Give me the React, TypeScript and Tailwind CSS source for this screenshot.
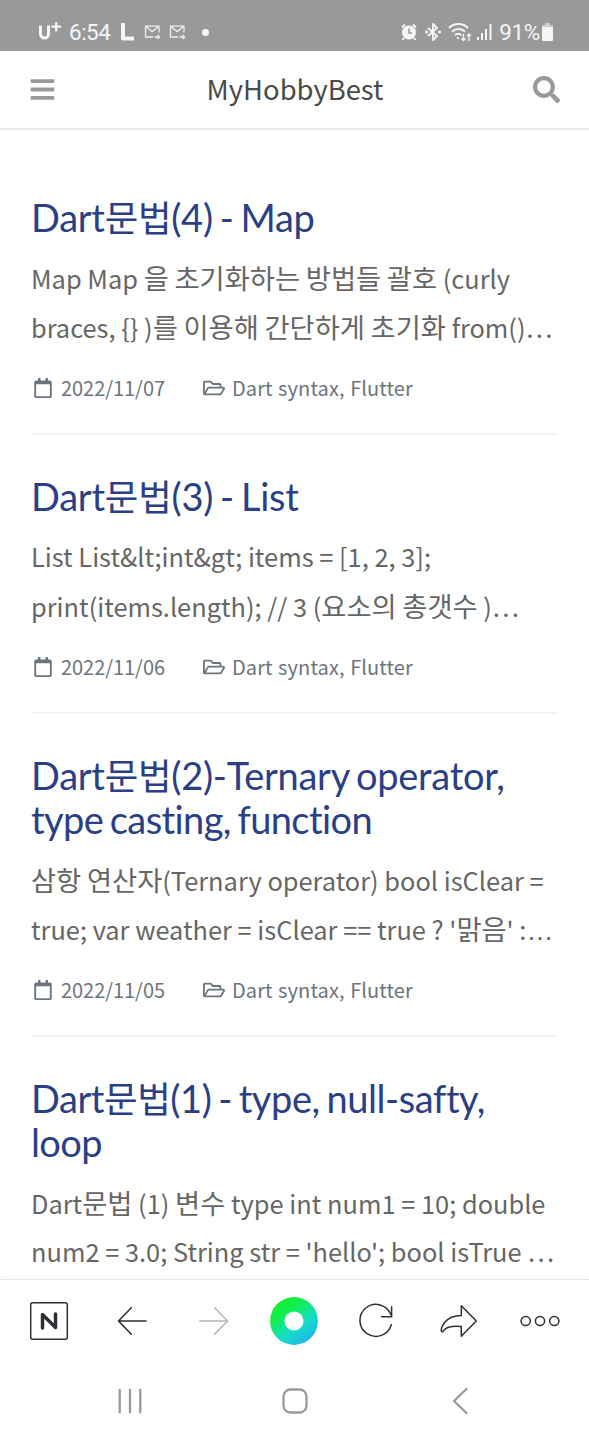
import React from 'react';
import { FaBars, FaSearch, FaRegCalendar, FaRegFolderOpen } from 'react-icons/fa';

type Line = { text: string; spacing: string };
type Post = { title: Line[]; body: string[]; date?: string };

const posts: Post[] = [
  {
    title: [{ text: 'Dart문법(4) - Map', spacing: 'tracking-[-0.28px]' }],
    body: ['Map Map 을 초기화하는 방법들 괄호 (curly', 'braces, {} )를 이용해 간단하게 초기화 from()…'],
    date: '2022/11/07',
  },
  {
    title: [{ text: 'Dart문법(3) - List', spacing: 'tracking-[-0.24px]' }],
    body: ['List List&lt;int&gt; items = [1, 2, 3];', 'print(items.length); // 3 (요소의 총갯수 )…'],
    date: '2022/11/06',
  },
  {
    title: [
      { text: 'Dart문법(2)-Ternary operator,', spacing: 'tracking-[-0.27px]' },
      { text: 'type casting, function', spacing: 'tracking-[-0.6px]' },
    ],
    body: ['삼항 연산자(Ternary operator) bool isClear =', "true; var weather = isClear == true ? '맑음' :…"],
    date: '2022/11/05',
  },
  {
    title: [
      { text: 'Dart문법(1) - type, null-safty,', spacing: 'tracking-[-0.43px]' },
      { text: 'loop', spacing: 'tracking-[-0.6px]' },
    ],
    body: ['Dart문법 (1) 변수 type int num1 = 10; double', "num2 = 3.0; String str = 'hello'; bool isTrue …"],
  },
];

function Runs({ text, hangul }: { text: string; hangul: string }) {
  return (
    <>
      {text.split(/([가-힣]+|(?<=:)…)/).map((run, i) => (
        <span key={i} className={run === '…' ? "inline-block font-['Liberation_Sans',sans-serif] text-[27px]" : i % 2 ? hangul : ''}>{run}</span>
      ))}
    </>
  );
}

function MailIcon() {
  return (
    <svg width="17" height="16" viewBox="0 0 17 16" fill="none" stroke="#eee" strokeWidth="1.3">
      <path d="M9 13H1.500V2.200H15v6.300M1.800 2.600l6.400 5 6.400-5M10.500 13h5M13.600 11l2 2-2 2" />
    </svg>
  );
}

function StatusBar() {
  return (
    <div className="flex h-[51px] shrink-0 items-center justify-between bg-[#999999] pr-[36px] pl-[38px] pt-[13px] font-[Roboto,sans-serif] text-[#f5f5f5]">
      <div className="flex items-center">
        <svg width="23" height="20" viewBox="0 0 23 20" fill="none" stroke="#f5f5f5">
          <path d="M2.500 3.500v8.500a4 4 0 0 0 8 0V3.500" strokeWidth="3" />
          <path d="M18.200 0v9.500M13.500 4.700h9.500" strokeWidth="2.200" />
        </svg>
        <span className="ml-[8px] text-[22.5px] leading-5 tracking-[-0.5px]">6:54</span>
        <svg className="ml-[10px]" width="15" height="20" viewBox="0 0 15 20" fill="none" stroke="#f5f5f5" strokeWidth="4" strokeLinejoin="round">
          <path d="M3 1v15.500h11" />
        </svg>
        <span className="ml-[9px] flex gap-2"><MailIcon /><MailIcon /></span>
        <span className="ml-[16px] size-[7px] rounded-full bg-[#f5f5f5]" />
      </div>
      <div className="flex items-center">
        <svg width="16" height="18" viewBox="0 0 16 18">
          <circle cx="8" cy="9.500" r="7" fill="#f5f5f5" />
          <path d="M1 4.500l3-3M15 4.500l-3-3M3 15l-1.500 2M13 15l1.500 2" stroke="#f5f5f5" strokeWidth="2" />
          <path d="M8 5.500v4.500h3" fill="none" stroke="#999" strokeWidth="1.500" />
        </svg>
        <svg className="ml-[8px]" width="16" height="18" viewBox="0 0 16 18" fill="none" stroke="#f5f5f5" strokeWidth="1.900">
          <path d="M3 5l9 8-4 4V1l4 4-9 8" />
          <circle cx="1.500" cy="9" r=".6" /><circle cx="14.500" cy="9" r=".6" />
        </svg>
        <svg className="ml-[7px]" width="24" height="19" viewBox="0 0 24 19" fill="none" stroke="#f5f5f5" strokeWidth="2">
          <path d="M1 5a13.500 13.500 0 0 1 19 0M4 8.700a9.300 9.300 0 0 1 13 0M7 12.200a5 5 0 0 1 6.500 0" />
          <circle cx="10" cy="15" r=".8" fill="#f5f5f5" strokeWidth="1" />
          <path d="M15.500 11v6.500M13.500 15.500l2 2 2-2M21 18v-7M19 13l2-2 2 2" strokeWidth="1.400" />
        </svg>
        <svg className="ml-[5px]" width="15" height="18" viewBox="0 0 15 18" fill="#f5f5f5">
          <path d="M0 14h2v3H0zM4 10h2v7H4zM8 6h2v11H8zM12.500 1h2v16h-2z" />
        </svg>
        <span className="ml-[7px] text-[22.5px] leading-5 tracking-[-0.3px]">91%</span>
        <svg className="ml-[2px]" width="11" height="18" viewBox="0 0 11 18">
          <path d="M3 0h5v2h3v3H0V2h3z" fill="#ccc" /><rect y="4" width="11" height="14" rx="1" fill="#f5f5f5" />
        </svg>
      </div>
    </div>
  );
}

function Article({ post }: { post: Post }) {
  return (
    <article>
      <h2 className="font-[Lato,'Noto_Sans_CJK_KR',sans-serif] text-[38px] leading-[44px] whitespace-nowrap text-[#2a3f86] [font-variant-ligatures:none] [word-spacing:-2.5px]">
        {post.title.map((line) => (
          <span key={line.text} className={'block h-[44px] ' + line.spacing}><Runs text={line.text} hangul="text-[36.5px]" /></span>
        ))}
      </h2>
      <p className="mt-[14px] text-[25.4px] leading-[49px] whitespace-nowrap text-[#666]">
        {post.body.map((line) => (
          <span key={line} className="block h-[49px]"><Runs text={line} hangul="text-[27.3px]" /></span>
        ))}
      </p>
      {post.date && (
        <div className="mb-[39px] flex h-[84px] items-center border-b-2 border-[#f3f3f3] pb-[8px] pl-[2px] text-[20px] text-[#6c757d]">
          <FaRegCalendar className="text-[20px]" />
          <span className="ml-[8px] w-[105px] tracking-[-0.05px]">{post.date}</span>
          <FaRegFolderOpen className="ml-[37px] text-[22px]" />
          <span className="ml-[7px] tracking-[0.1px] [word-spacing:0.8px]">Dart syntax, Flutter</span>
        </div>
      )}
    </article>
  );
}

const tool = 'mx-auto block';

export default function App() {
  return (
    <div lang="en" className="flex h-[1440px] w-[589px] flex-col overflow-hidden bg-white font-['Noto_Sans_CJK_KR',sans-serif]">
      <StatusBar />
      <header className="flex h-[79px] shrink-0 items-center justify-between border-b-2 border-[#e8e8e8] pr-[29px] pl-[29px] text-[#999]">
        <FaBars className="text-[27px]" />
        <h1 className="pb-[2px] pl-[1px] text-[27.4px] text-[#4a4a4a]">MyHobbyBest</h1>
        <FaSearch className="text-[27px]" />
      </header>
      <main className="min-h-0 flex-1 overflow-hidden pt-[65px] pr-[31px] pl-[31px]">
        {posts.map((post) => <Article key={post.title[0].text} post={post} />)}
      </main>
      <nav className="grid h-[82px] shrink-0 grid-cols-7 items-center border-t border-[#e4e7ea] bg-white px-2 shadow-[0_-2px_6px_rgba(0,0,40,0.04)]">
        <svg className={tool} width="48" height="48" viewBox="-24 -24 48 48" fill="none" stroke="#2d3036">
          <rect x="-18.300" y="-18.300" width="36.600" height="36.600" rx="2" strokeWidth="1.500" />
          <path d="M-6.500 7V-6.500L6.500 6.500V-7" strokeWidth="3.500" strokeLinecap="round" strokeLinejoin="round" />
        </svg>
        <svg className={tool} width="48" height="48" viewBox="-24 -24 48 48" fill="none" stroke="#2d3036" strokeWidth="1.600" strokeLinecap="round" strokeLinejoin="round">
          <path d="M.3-13.200L-12.500 0 .3 13.200M-12.500 0H15" />
        </svg>
        <svg className={tool} width="48" height="48" viewBox="-24 -24 48 48" fill="none" stroke="#b5b5b5" strokeWidth="1.600" strokeLinecap="round" strokeLinejoin="round">
          <path d="M1.600-13.200L14.600 0 1.600 13.200M14.600 0H-13.200" />
        </svg>
        <svg className={tool} width="48" height="48" viewBox="-24 -24 48 48">
          <defs>
            <linearGradient id="ring" x1="0.2" y1="0.1" x2="0.8" y2="0.95">
              <stop offset="0" stopColor="#12f030" /><stop offset=".25" stopColor="#12ee50" /><stop offset=".6" stopColor="#14dfc0" /><stop offset="1" stopColor="#20b4f4" />
            </linearGradient>
          </defs>
          <circle r="23.900" fill="url(#ring)" /><circle r="9.500" fill="#fff" />
        </svg>
        <svg className={tool} width="48" height="48" viewBox="-24 -24 48 48" fill="none" stroke="#2d3036" strokeWidth="1.500" strokeLinecap="round">
          <path d="M15.300 3.800A16 16 0 1 1 14.800-6.500" /><path d="M15.600-14.300V-4.300H5.500" />
        </svg>
        <svg className={tool} width="48" height="48" viewBox="-24 -24 48 48" fill="none" stroke="#2d3036" strokeWidth="1.500" strokeLinejoin="round">
          <path d="M3.300-15.200L18.300 0 3.300 15.200V5.500C-6 5-12.500 5.500-15.300 10.800-18.200 11.500-16.300 5-13.500 1.500-9-4-4-5.600 3.300-5.600Z" />
        </svg>
        <svg className={tool} width="48" height="48" viewBox="-24 -24 48 48" fill="none" stroke="#2d3036" strokeWidth="1.500">
          <circle cx="-14.300" r="4.600" /><circle r="4.600" /><circle cx="14.300" r="4.600" />
        </svg>
      </nav>
      <div className="grid h-[79px] shrink-0 grid-cols-3 items-center bg-white px-[47px]">
        <svg className={tool} width="32" height="32" viewBox="-16 -16 32 32" fill="none" stroke="#999" strokeWidth="2.300" strokeLinecap="round">
          <path d="M-10.300-11.200v22.600M0-11.200v22.600M10.300-11.200v22.600" />
        </svg>
        <svg className={tool} width="32" height="32" viewBox="-16 -16 32 32" fill="none" stroke="#999" strokeWidth="2.300">
          <rect x="-11.500" y="-11.500" width="23" height="23" rx="7" />
        </svg>
        <svg className={tool} width="32" height="32" viewBox="-16 -16 32 32" fill="none" stroke="#999" strokeWidth="2.300" strokeLinecap="round" strokeLinejoin="round">
          <path d="M6.500-12L-6 0 6.500 12" />
        </svg>
      </div>
    </div>
  );
}
